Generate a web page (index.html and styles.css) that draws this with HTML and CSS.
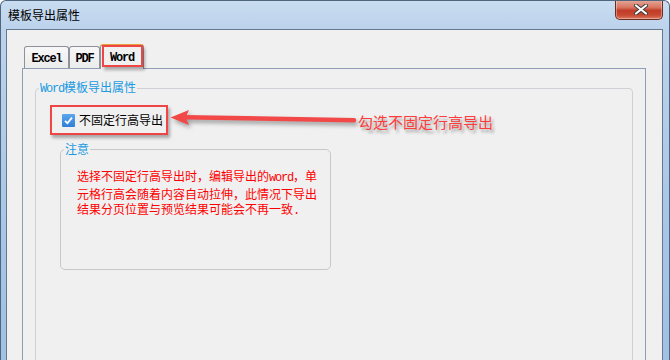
FILE: index.html
```html
<!DOCTYPE html>
<html lang="zh-CN">
<head>
<meta charset="utf-8">
<title>模板导出属性</title>
<link rel="stylesheet" href="styles.css">
</head>
<body>
<div class="window">
  <div class="titlebar">
    <span class="title">模板导出属性</span>
    <button class="close" aria-label="关闭">
      <svg width="14" height="11" viewBox="0 0 14 11">
        <path d="M2 1.5 L12 9.5 M12 1.5 L2 9.5" stroke="#3b3b3b" stroke-width="4" stroke-linecap="round"/>
        <path d="M2 1.5 L12 9.5 M12 1.5 L2 9.5" stroke="#ffffff" stroke-width="2.2" stroke-linecap="round"/>
      </svg>
    </button>
  </div>
  <div class="client">
    <div class="tabs">
      <div class="tab tab-excel">Excel</div>
      <div class="tab tab-pdf">PDF</div>
      <div class="tab tab-word active">Word<span class="mark"></span></div>
    </div>
    <div class="pane">
      <fieldset class="group">
        <legend><span class="lat">Word</span>模板导出属性</legend>
        <div class="opt">
          <span class="check">
            <svg width="13" height="13" viewBox="0 0 13 13">
              <defs>
                <linearGradient id="cb" x1="0" y1="0" x2="0" y2="1">
                  <stop offset="0" stop-color="#5aa6ee"/>
                  <stop offset="1" stop-color="#2f7fd6"/>
                </linearGradient>
              </defs>
              <rect x="0" y="0" width="13" height="13" rx="1" fill="url(#cb)"/>
              <path d="M3 6.8 L5.4 9.2 L10 3.6" fill="none" stroke="#ffffff" stroke-width="1.8"/>
            </svg>
          </span>
          <span class="opt-label">不固定行高导出</span>
        </div>
        <fieldset class="note">
          <legend>注意</legend>
          <p>选择不固定行高导出时，编辑导出的<span class="lat">word</span>，单<br>元格行高会随着内容自动拉伸，此情况下导出<br>结果分页位置与预览结果可能会不再一致<span class="lat">.</span></p>
        </fieldset>
      </fieldset>
    </div>
  </div>
  <svg class="arrow" width="670" height="360" viewBox="0 0 670 360">
    <line x1="185" y1="117.2" x2="354" y2="120.3" stroke="#f24848" stroke-width="4.5" stroke-linecap="round"/>
    <path d="M170.5 117.5 L189 110 L185.5 117.5 L189 125 Z" fill="#f24848"/>
  </svg>
  <div class="callout">勾选不固定行高导出</div>
</div>
</body>
</html>
```
FILE: styles.css
```css
html, body {
  margin: 0;
  padding: 0;
}
body {
  width: 670px;
  height: 360px;
  overflow: hidden;
  background: #ffffff;
  font-family: "Noto Sans CJK SC", "Noto Sans", sans-serif;
  font-size: 12px;
}
.window {
  position: relative;
  height: 380px;
  box-sizing: border-box;
  border: 1px solid #50667f;
  border-bottom: none;
  border-radius: 6px 6px 0 0;
  background: linear-gradient(to bottom, #c9dcf0 0, #bcd3ec 28px, #a9c7e7 200px, #9fc0e4 100%);
  padding: 0 6px 0 5px;
  display: flex;
  flex-direction: column;
  overflow: hidden;
}
.titlebar {
  flex: 0 0 28px;
  height: 28px;
  display: flex;
  align-items: flex-start;
}
.title {
  padding: 7px 0 0 2px;
  line-height: 14px;
  color: #000;
}
.close {
  margin: -1px 0 0 auto;
  width: 48px;
  height: 20px;
  box-sizing: border-box;
  padding: 0;
  border: 1px solid #6b2c22;
  border-top: none;
  border-radius: 0 0 5px 5px;
  background: linear-gradient(to bottom, #e6ab9c 0, #d7735f 40%, #c23c27 55%, #c84a33 80%, #dc7a5e 100%);
  box-shadow: inset 0 0 0 1px rgba(255, 255, 255, 0.35);
  display: flex;
  align-items: center;
  justify-content: center;
}
.close svg {
  display: block;
  margin-left: 3px;
}
.client {
  flex: 1 1 auto;
  min-height: 0;
  background: #f0f0f0;
  border: 1px solid #67788e;
  border-bottom: none;
  padding: 14px 16px 0 15px;
  display: flex;
  flex-direction: column;
  overflow: hidden;
}
.tabs {
  flex: 0 0 24px;
  display: flex;
  align-items: flex-end;
  height: 24px;
  padding-left: 2px;
}
.tab {
  height: 22px;
  box-sizing: border-box;
  border: 1px solid #8e9197;
  border-bottom: none;
  border-radius: 3px 3px 0 0;
  background: linear-gradient(to bottom, #f7f7f7, #ececec);
  display: flex;
  align-items: center;
  justify-content: center;
  padding-top: 2px;
  font-family: "Liberation Mono", "DejaVu Sans Mono", monospace;
  font-weight: bold;
  font-size: 12px;
  letter-spacing: -1.2px;
  color: #000;
}
.tab-excel { width: 45px; }
.tab-pdf { width: 31px; }
.tab-word { width: 44px; }
.tab.active {
  position: relative;
  z-index: 1;
  height: 25px;
  margin-bottom: -1px;
  padding-top: 0;
  background: #f0f0f0;
  border-top: 2px solid #e3a23c;
}
.mark {
  position: absolute;
  left: 1px;
  top: -1px;
  right: 0;
  bottom: 2px;
  border: 2px solid #f04545;
  box-shadow: 2px 3px 3px rgba(0, 0, 0, 0.3);
}
.pane {
  flex: 1 1 auto;
  min-height: 0;
  border: 1px solid #8f9eb5;
  border-bottom: none;
  padding: 11px 12px 0 12px;
  display: flex;
  flex-direction: column;
}
.group {
  flex: 0 0 auto;
  margin: 0;
  padding: 0;
  min-height: 400px;
  border: 1px solid #cdd1d6;
  border-radius: 4px;
}
.group > legend {
  margin-left: 3px;
  padding: 0 1px;
  line-height: 14px;
  color: #1b9ae0;
}
.lat {
  font-family: "Liberation Mono", "DejaVu Sans Mono", monospace;
  letter-spacing: -1.2px;
}
.opt {
  margin: 9px 0 0 14px;
  width: 118px;
  height: 30px;
  box-sizing: border-box;
  border: 2px solid #f04545;
  box-shadow: 2px 3px 3px rgba(0, 0, 0, 0.3);
  display: flex;
  align-items: center;
  padding-left: 10px;
  gap: 4px;
}
.check {
  display: flex;
  width: 13px;
  height: 13px;
}
.check svg { display: block; }
.opt-label {
  line-height: 14px;
  color: #000;
}
.note {
  margin: 7px 0 0 24px;
  width: 271px;
  height: 128px;
  box-sizing: border-box;
  padding: 0;
  border: 1px solid #c8c8c8;
  border-radius: 5px;
}
.note > legend {
  margin-left: 3px;
  padding: 0 1px;
  line-height: 14px;
  color: #1b9ae0;
}
.note p {
  margin: 12px 0 0 16px;
  line-height: 15px;
  color: #ff0000;
  white-space: nowrap;
}
.arrow {
  position: absolute;
  left: -1px;
  top: -1px;
  pointer-events: none;
  filter: drop-shadow(2px 3px 2px rgba(0, 0, 0, 0.35));
}
.callout {
  position: absolute;
  left: 357px;
  top: 112px;
  font-size: 15px;
  line-height: 18px;
  color: #ff3c3c;
  text-shadow: 2px 3px 3px rgba(0, 0, 0, 0.35);
  white-space: nowrap;
}
```
